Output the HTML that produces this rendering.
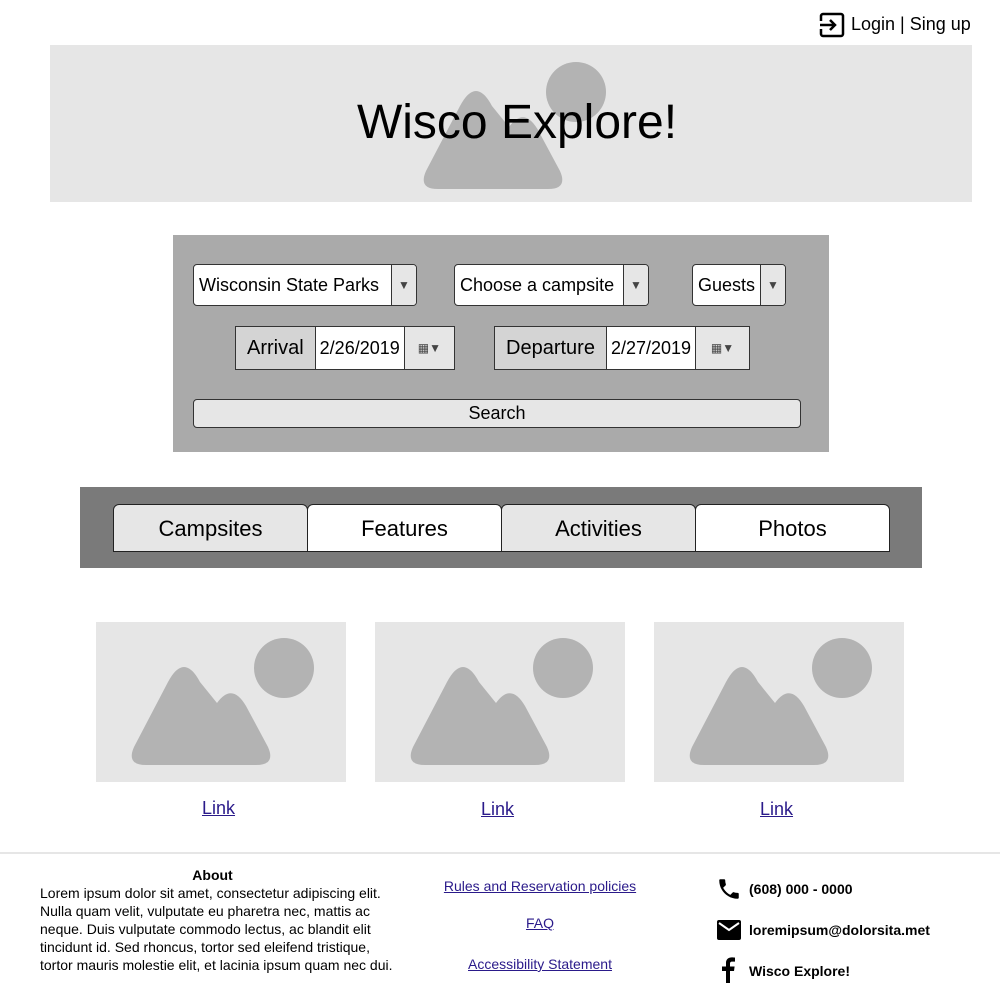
<!DOCTYPE html>
<html><head><meta charset="utf-8"><style>
*{box-sizing:border-box;margin:0;padding:0}
body{width:1000px;height:1000px;position:relative;background:#fff;font-family:"Liberation Sans",sans-serif;color:#000;overflow:hidden}
.a{position:absolute}
.sel{position:absolute;background:#fff;border:1px solid #333;border-radius:4px;height:42px;font-size:18px;line-height:40px;padding-left:5px;overflow:hidden}
.sel .ar{position:absolute;right:0;top:0;bottom:0;width:25px;background:#e6e6e6;border-left:1px solid #333;font-size:12px;text-align:center;color:#444}
.grp{position:absolute;height:44px;border:1px solid #333;display:flex;font-size:20px;line-height:42px}
.grp .l{background:#d4d4d4;padding:0 11px;border-right:1px solid #333}
.grp .v{background:#fff;padding:0 4px;border-right:1px solid #333;font-size:18px}
.grp .c{background:#e6e6e6;flex:1;font-size:12px;text-align:center;color:#444}
.tab{position:absolute;top:504px;width:195px;height:48px;border:1px solid #222;border-radius:6px 6px 0 0;font-size:22px;text-align:center;line-height:47px}
.ph{position:absolute;width:250px;height:160px;background:#e6e6e6;top:622px}
.lk{position:absolute;font-size:18px;text-decoration:underline;color:#2a1a8a}
.fl{position:absolute;font-size:14px;color:#2a1a8a;text-decoration:underline;text-align:center;width:300px;left:390px}
.ci{position:absolute;left:749px;font-size:14px;font-weight:bold}
</style></head><body>
<svg class="a" style="left:819px;top:12px" width="26" height="26" viewBox="0 0 26 26"><rect x="2" y="2" width="22" height="22" rx="2" fill="none" stroke="#000" stroke-width="2.5"/><rect x="0" y="9" width="5" height="8" fill="#fff"/><path d="M1 13 H16 M11 8 L16 13 L11 18" fill="none" stroke="#000" stroke-width="2.5"/></svg>
<div class="a" style="left:851px;top:14px;font-size:18px">Login | Sing up</div>

<div class="a" style="left:50px;top:45px;width:922px;height:157px;background:#e6e6e6;overflow:hidden">
<svg class="a" style="left:338px;top:1px" width="250" height="160"><circle cx="188" cy="46" r="30" fill="#b3b3b3"/><path d="M50,143 Q30,143 38,125 L72,60 Q88,30 104,60 L121,81 Q136,60 150,84 L172,125 Q180,143 160,143 Z" fill="#b3b3b3"/></svg>
<div class="a" style="left:6px;width:922px;top:50px;text-align:center;font-size:48px">Wisco Explore!</div>
</div>

<div class="a" style="left:173px;top:235px;width:656px;height:217px;background:#aaa"></div>
<div class="sel" style="left:193px;top:264px;width:224px">Wisconsin State Parks<div class="ar">▼</div></div>
<div class="sel" style="left:454px;top:264px;width:195px">Choose a campsite<div class="ar">▼</div></div>
<div class="sel" style="left:692px;top:264px;width:94px">Guests<div class="ar">▼</div></div>
<div class="grp" style="left:235px;top:326px;width:220px"><div class="l">Arrival</div><div class="v">2/26/2019</div><div class="c">▦▼</div></div>
<div class="grp" style="left:494px;top:326px;width:256px"><div class="l">Departure</div><div class="v">2/27/2019</div><div class="c">▦▼</div></div>
<div class="a" style="left:193px;top:399px;width:608px;height:29px;background:#e6e6e6;border:1px solid #333;border-radius:4px;text-align:center;font-size:18px;line-height:26px">Search</div>

<div class="a" style="left:80px;top:487px;width:842px;height:81px;background:#7a7a7a"></div>
<div class="tab" style="left:113px;background:#e6e6e6">Campsites</div>
<div class="tab" style="left:307px;background:#fff">Features</div>
<div class="tab" style="left:501px;background:#e6e6e6">Activities</div>
<div class="tab" style="left:695px;background:#fff">Photos</div>

<div class="ph" style="left:96px"><svg width="250" height="160"><circle cx="188" cy="46" r="30" fill="#b3b3b3"/><path d="M50,143 Q30,143 38,125 L72,60 Q88,30 104,60 L121,81 Q136,60 150,84 L172,125 Q180,143 160,143 Z" fill="#b3b3b3"/></svg></div>
<div class="ph" style="left:375px"><svg width="250" height="160"><circle cx="188" cy="46" r="30" fill="#b3b3b3"/><path d="M50,143 Q30,143 38,125 L72,60 Q88,30 104,60 L121,81 Q136,60 150,84 L172,125 Q180,143 160,143 Z" fill="#b3b3b3"/></svg></div>
<div class="ph" style="left:654px"><svg width="250" height="160"><circle cx="188" cy="46" r="30" fill="#b3b3b3"/><path d="M50,143 Q30,143 38,125 L72,60 Q88,30 104,60 L121,81 Q136,60 150,84 L172,125 Q180,143 160,143 Z" fill="#b3b3b3"/></svg></div>
<div class="lk" style="left:202px;top:798px">Link</div>
<div class="lk" style="left:481px;top:799px">Link</div>
<div class="lk" style="left:760px;top:799px">Link</div>

<div class="a" style="left:0;top:852px;width:1000px;height:2px;background:#e6e6e6"></div>
<div class="a" style="left:40px;top:866px;width:360px;font-size:14px;line-height:18px">
<div style="text-align:center;font-weight:bold;margin-left:-15px">About</div>
Lorem ipsum dolor sit amet, consectetur adipiscing elit. Nulla quam velit, vulputate eu pharetra nec, mattis ac neque. Duis vulputate commodo lectus, ac blandit elit tincidunt id. Sed rhoncus, tortor sed eleifend tristique, tortor mauris molestie elit, et lacinia ipsum quam nec dui.</div>
<div class="fl" style="top:878px">Rules and Reservation policies</div>
<div class="fl" style="top:915px">FAQ</div>
<div class="fl" style="top:956px">Accessibility Statement</div>

<svg class="a" style="left:716px;top:876px" width="26" height="26" viewBox="0 0 24 24"><path d="M6.6 10.8c1.4 2.8 3.8 5.1 6.6 6.6l2.2-2.2c.3-.3.7-.4 1-.2 1.1.4 2.3.6 3.6.6.6 0 1 .4 1 1V20c0 .6-.4 1-1 1C10.6 21 3 13.4 3 4c0-.6.4-1 1-1h3.5c.6 0 1 .4 1 1 0 1.3.2 2.5.6 3.6.1.3 0 .7-.2 1z" fill="#000"/></svg>
<div class="ci" style="top:881px">(608) 000 - 0000</div>
<svg class="a" style="left:716px;top:919px" width="26" height="22" viewBox="0 0 26 22"><rect x="1" y="1" width="24" height="20" rx="2" fill="#000"/><path d="M3 4 L13 11 L23 4" fill="none" stroke="#fff" stroke-width="2"/></svg>
<div class="ci" style="top:922px">loremipsum@dolorsita.met</div>
<svg class="a" style="left:720px;top:957px" width="16" height="26" viewBox="0 0 16 26"><path d="M10 26V14h4l.6-4.5H10V6.8c0-1.3.4-2.2 2.2-2.2H15V.6C14.5.5 13.2.4 11.7.4 8.6.4 6 2.3 6 5.8v3.7H2V14h4v12z" fill="#000"/></svg>
<div class="ci" style="top:963px">Wisco Explore!</div>
</body></html>
